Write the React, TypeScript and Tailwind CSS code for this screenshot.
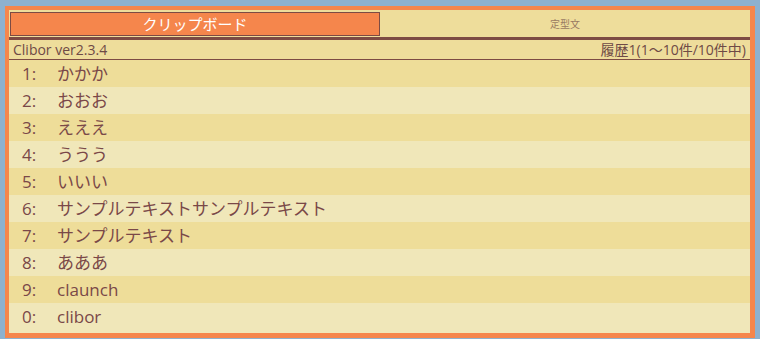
const ITEMS = [
	{ key: "1", text: "かかか" },
	{ key: "2", text: "おおお" },
	{ key: "3", text: "えええ" },
	{ key: "4", text: "ううう" },
	{ key: "5", text: "いいい" },
	{ key: "6", text: "サンプルテキストサンプルテキスト" },
	{ key: "7", text: "サンプルテキスト" },
	{ key: "8", text: "あああ" },
	{ key: "9", text: "claunch" },
	{ key: "0", text: "clibor" },
];

const FONT = "font-['Open_Sans','Noto_Sans_CJK_JP',sans-serif]";

export default function App() {
	return (
		<div className={`w-[760px] h-[339px] bg-[#8db1cf] pt-[6px] pl-[5px] ${FONT}`}>
			<div className="w-[750px] h-[332px] border-[#f5864c] border-l-4 border-t-4 border-r-[5px] border-b-[5px] flex flex-col bg-[#f0e7b9]">
				{/* tabs */}
				<div className="flex bg-[#eedd9b] pt-[2px] pb-[1px] pl-[1px] h-[27px] shrink-0">
					<div className="w-[370px] h-[24px] bg-[#f5864c] border border-[#7d4b43] flex items-center justify-center text-white text-[15px] leading-none">
						クリップボード
					</div>
					<div className="flex-1 flex items-center justify-center text-[10px] text-[#9a7a62] leading-none">
						定型文
					</div>
				</div>
				<div className="h-[3px] bg-[#7d4b43] shrink-0" />
				{/* status */}
				<div className="h-[20px] flex items-center justify-between pl-[4px] pr-[4px] bg-[#eedd9b] border-b border-[#7d4b43] text-[14px] text-[#6e4a46] leading-none shrink-0">
					<span>Clibor ver2.3.4</span>
					<span>履歴1(1～10件/10件中)</span>
				</div>
				{/* list */}
				<div className="flex-1 flex flex-col">
					{ITEMS.map((item, i) => (
						<div
							key={item.key}
							className={`h-[27px] shrink-0 flex items-center text-[17px] text-[#7a4848] leading-none ${
								i % 2 === 0 ? "bg-[#eedd99]" : "bg-[#f0e7b9]"
							}`}
						>
							<span className="w-[48px] pl-[13px] shrink-0">{item.key}:</span>
							<span>{item.text}</span>
						</div>
					))}
				</div>
			</div>
		</div>
	);
}
